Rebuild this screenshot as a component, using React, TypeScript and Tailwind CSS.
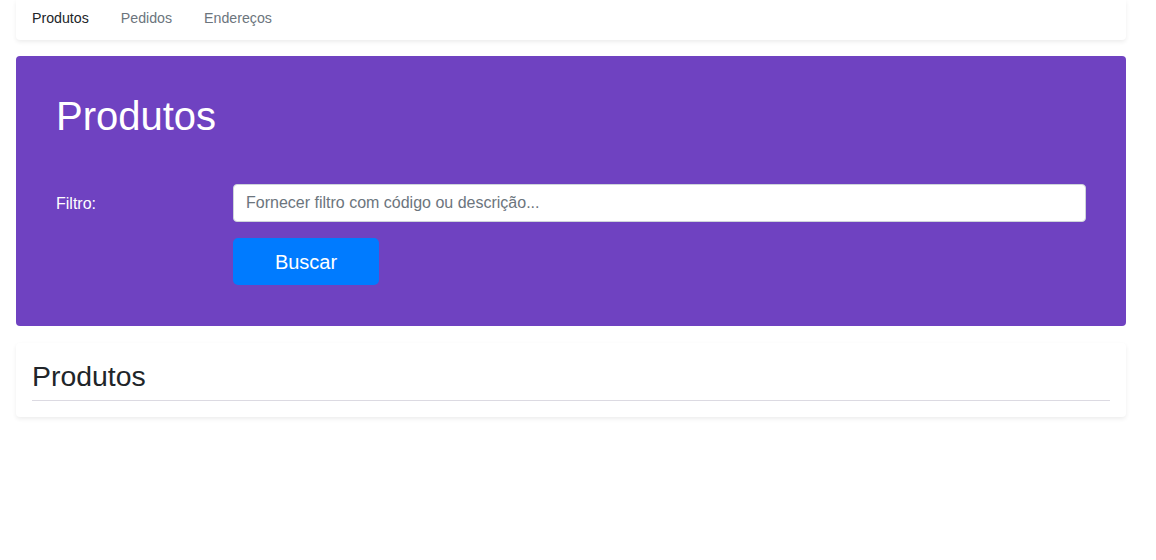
const tabs = [
  { label: "Produtos", active: true },
  { label: "Pedidos", active: false },
  { label: "Endereços", active: false },
];

export default function App() {
  return (
    <div
      className="min-h-[560px] bg-white px-4 text-[#212529]"
      style={{ fontFamily: '"Liberation Sans", Arial, sans-serif' }}
    >
      <div className="w-[1110px]">
        {/* top nav */}
        <nav className="flex h-10 items-center pb-1 rounded-b shadow-[0_2px_4px_rgba(0,0,0,0.075)] bg-white">
          <ul className="flex px-0">
            {tabs.map((t) => (
              <li key={t.label}>
                <a
                  href="#"
                  className={
                    t.active
                      ? "block px-4 text-[14.2px] leading-[21px] text-[#212529]"
                      : "block px-4 text-[14.2px] leading-[21px] text-[#6c757d]"
                  }
                >
                  {t.label}
                </a>
              </li>
            ))}
          </ul>
        </nav>

        {/* jumbotron */}
        <section className="mt-4 rounded bg-[#6f42c1] px-10 pt-9 pb-[41px] text-white">
          <h1 className="text-[40px] leading-[48px]">Produtos</h1>
          <form className="mt-11" onSubmit={(e) => e.preventDefault()}>
            <div className="flex items-center">
              <label htmlFor="filtro" className="w-[177px] shrink-0 pt-[2px] text-base leading-6">
                Filtro:
              </label>
              <input
                id="filtro"
                type="text"
                placeholder="Fornecer filtro com código ou descrição..."
                className="h-[38px] flex-1 rounded border border-[#ced4da] bg-white px-3 text-base text-[#495057] placeholder:text-[#6c757d] outline-none"
              />
            </div>
            <div className="mt-4 flex">
              <div className="w-[177px] shrink-0" />
              <button
                type="submit"
                className="h-[47px] w-[146px] rounded-[5px] bg-[#007bff] text-xl text-white"
              >
                Buscar
              </button>
            </div>
          </form>
        </section>

        {/* list card */}
        <section className="mt-[17px] rounded bg-white p-4 shadow-[0_2px_4px_rgba(0,0,0,0.075)]">
          <h3 className="text-[28.4px] leading-[34px]">Produtos</h3>
          <hr className="mt-[7px] border-t border-[#dcdae2]" />
        </section>
      </div>
    </div>
  );
}
